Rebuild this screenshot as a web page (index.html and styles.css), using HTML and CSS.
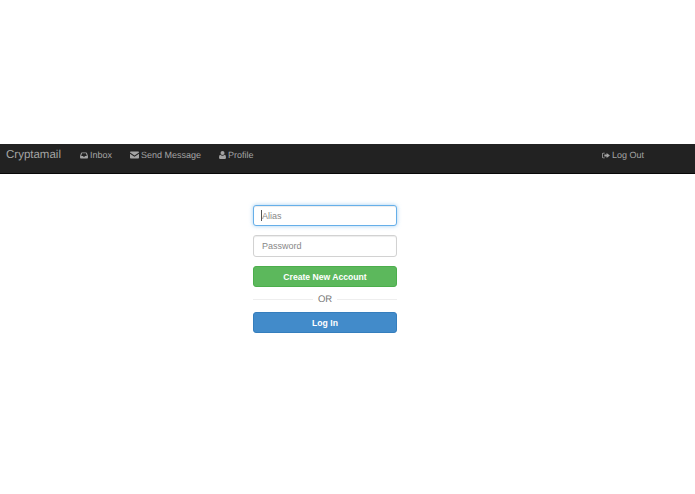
FILE: index.html
```html
<!DOCTYPE html>
<html lang="en">
<head>
    <meta charset="UTF-8">
    <title>Cryptamail</title>
    <link rel="stylesheet" href="styles.css">
</head>
<body>
    <header class="navbar">
        <a class="brand" href="#">Cryptamail</a>
        <nav class="nav-links">
            <a class="nav-link" href="#">
                <svg class="icon" width="8" height="7" viewBox="0 0 9 8"><path fill="currentColor" fill-rule="evenodd" d="M2 .5h5q.6 0 .9.7L9 4.500v2.200q0 .8-.8.8H.8Q0 7.500 0 6.700V4.500L1.100 1.200Q1.400.5 2 .5zM2.200 1.500 1.300 4.500h2l.5 1h1.400l.5-1h2l-.9-3z"/></svg>
                Inbox
            </a>
            <a class="nav-link" href="#">
                <svg class="icon" width="9" height="8" viewBox="0 0 9 8"><path fill="currentColor" d="M0 1.200Q0 .5.800.5h7.400Q9 .5 9 1.200v.4L4.500 4.600 0 1.600zM0 2.800l4.500 3 4.500-3v4q0 .7-.8.7H.8Q0 7.500 0 6.800z"/></svg>
                Send Message
            </a>
            <a class="nav-link" href="#">
                <svg class="icon" width="7" height="8" viewBox="0 0 7 8"><circle fill="currentColor" cx="3.500" cy="2.100" r="2"/><path fill="currentColor" d="M1.300 3.700q1 1 2.200 1t2.200-1Q7 4 7 6.500 7 8 5.800 8H1.200Q0 8 0 6.500 0 4 1.300 3.700z"/></svg>
                Profile
            </a>
        </nav>
        <a class="nav-link" href="#">
            <svg class="icon" width="8" height="7" viewBox="0 0 9 8"><path fill="currentColor" d="M3 .8H1.600Q0 .8 0 2.300v3.400q0 1.500 1.600 1.500H3V6.400H1.700q-.8 0-.8-.8V2.400q0-.8.8-.8H3zM5.200 1.200 9 4 5.200 6.800V5.200H2.600V2.800h2.600z"/></svg>
            Log Out
        </a>
    </header>

    <main class="login">
        <form class="login-form">
            <div class="field-wrap">
                <input class="field field-focus" type="text" placeholder="Alias">
                <span class="caret"></span>
            </div>
            <div class="field-wrap">
                <input class="field field-tall" type="password" placeholder="Password">
            </div>
            <button class="btn btn-green" type="button">Create New Account</button>
            <div class="divider"><span>OR</span></div>
            <button class="btn btn-blue" type="button">Log In</button>
        </form>
    </main>
</body>
</html>
```

FILE: styles.css
```css
body {
    font-family: "Liberation Sans", Arial, sans-serif;
    text-rendering: geometricPrecision;
    background-color: #fff;
    margin: 0;
    padding: 144px 0 0;
    min-height: 350px;
}

.navbar {
    background-color: #222;
    border-bottom: 1px solid #080808;
    height: 29px;
    padding: 0 51px 0 6px;
    display: flex;
    align-items: flex-start;
}

.brand {
    color: #a4a4a4;
    font-size: 11.5px;
    line-height: 23px;
    text-decoration: none;
}

.nav-links {
    display: flex;
    gap: 18px;
    margin-left: 19px;
    flex: 1;
}

.nav-link {
    color: #a4a4a4;
    font-size: 9px;
    line-height: 22px;
    text-decoration: none;
    display: flex;
    align-items: center;
    gap: 2px;
}

.login {
    padding: 31px 0 0 253px;
}

.login-form {
    width: 144px;
    display: flex;
    flex-direction: column;
}

.field-wrap {
    position: relative;
    margin-bottom: 9px;
}

.field {
    display: block;
    width: 100%;
    height: 21px;
    padding: 0 8px;
    margin: 0;
    border: 1px solid #d2d2d2;
    border-radius: 3px;
    box-sizing: border-box;
    font-family: inherit;
    font-size: 9px;
    color: #555;
    box-shadow: inset 0 1px 1px rgba(0, 0, 0, .075);
}

.field-tall {
    height: 22px;
}

.field::placeholder {
    color: #888;
    opacity: 1;
}

.field-focus {
    border-color: #66afe9;
    box-shadow: inset 0 1px 1px rgba(0, 0, 0, .075), 0 0 4px rgba(102, 175, 233, .6);
}

.caret {
    position: absolute;
    left: 8px;
    top: 5px;
    width: 1px;
    height: 11px;
    background-color: #555;
}

.btn {
    height: 21px;
    padding: 0;
    border: 1px solid;
    border-radius: 3px;
    box-sizing: border-box;
    color: #fff;
    font-family: inherit;
    font-size: 8.6px;
    font-weight: bold;
    cursor: pointer;
}

.btn-green {
    background-color: #5cb85c;
    border-color: #4cae4c;
}

.btn-blue {
    background-color: #428bca;
    border-color: #357ebd;
}

.divider {
    display: flex;
    align-items: center;
    gap: 5px;
    height: 25px;
    color: #777;
    font-size: 9.5px;
}

.divider::before,
.divider::after {
    content: "";
    flex: 1;
    border-top: 1px solid #eee;
}
```
